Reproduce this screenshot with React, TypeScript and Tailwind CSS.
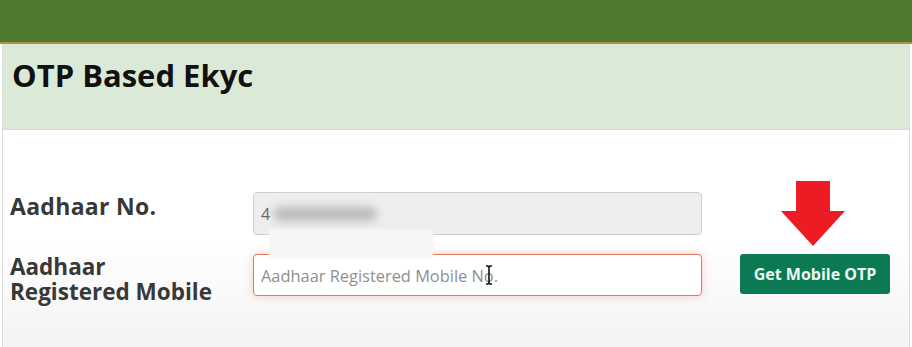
import React from 'react';

const ArrowDown: React.FC = () => (
  <svg width="66" height="66" viewBox="0 0 66 66" className="block">
    <path d="M16 0 H50 V30 H65 L33 65 L1 30 H16 Z" fill="#ed1c24" />
  </svg>
);

const TextCursor: React.FC = () => (
  <svg width="8" height="20" viewBox="0 0 8 20" className="block">
    <path d="M1 1 H3 L4 2 L5 1 H7 M4 2 V18 M1 19 H3 L4 18 L5 19 H7" stroke="#111" strokeWidth="1.6" fill="none" />
  </svg>
);

const App: React.FC = () => {
  return (
    <div className="w-[912px] h-[347px] overflow-hidden bg-white font-['Open_Sans',sans-serif]">
      <div className="h-[44px] bg-[#517a31] border-b-2 border-[#b08a4e]" />
      <div className="mx-[2px] h-[303px] border-l border-r border-[#dcdcdc] bg-gradient-to-b from-white from-[65%] to-[#f3f3f3]">
        <div className="h-[86px] bg-[#dbead6] border-b border-[#cfdccb] px-[9px] pt-[11px]">
          <h1 className="text-[31px] leading-[40px] font-bold text-[#111]">OTP Based Ekyc</h1>
        </div>

        <div className="pt-[62px] pl-[7px] grid grid-cols-[243px_449px_1fr] gap-y-[19px] items-start">
          <label className="text-[23px] leading-[28px] font-bold text-[#383838] tracking-[0.3px]">Aadhaar No.</label>
          <div className="relative">
            <div className="h-[43px] rounded-[4px] border border-[#cfcfcf] bg-[#eeeeee] px-[7px] flex items-center text-[16px] text-[#666]">
              4
            </div>
            <span className="absolute left-[20px] top-[15px] w-[104px] h-[14px] rounded-full bg-[#b9b9b9] blur-[5px]" />
            <span className="absolute left-[16px] top-[37px] w-[164px] h-[30px] bg-[#f6f6f6] blur-[1px] z-10" />
          </div>
          <div />

          <label className="text-[22.5px] leading-[25px] font-bold text-[#383838]">
            <span className="block">Aadhaar</span>
            <span className="block">Registered Mobile</span>
          </label>
          <div className="relative">
            <input
              className="w-full h-[42px] rounded-[4px] border border-[#e07a5f] bg-white px-[7px] text-[16.4px] text-[#333] placeholder:text-[#8f8f8f] outline-none shadow-[0_0_8px_rgba(240,120,90,0.35)]"
              placeholder="Aadhaar Registered Mobile No."
            />
            <span className="absolute left-[232px] top-[11px]">
              <TextCursor />
            </span>
          </div>
          <div className="pl-[38px]">
            <div className="relative w-[150px]">
              <span className="absolute left-[40px] bottom-full mb-[7px]">
                <ArrowDown />
              </span>
              <button className="w-[150px] h-[40px] rounded-[3px] bg-[#0b7a53] text-[#eefaf4] text-[16px] font-bold">
                Get Mobile OTP
              </button>
            </div>
          </div>
        </div>
      </div>
    </div>
  );
};

export default App;
